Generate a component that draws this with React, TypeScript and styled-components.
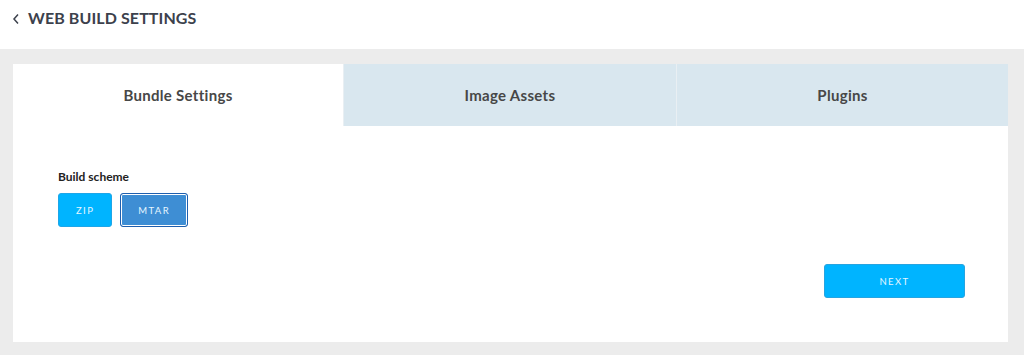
import React, { useState } from 'react'
import styled, { createGlobalStyle } from 'styled-components'

const GlobalStyle = createGlobalStyle`
    html, body {
        margin: 0;
        padding: 0;
        background: #ececec;
        font-family: Lato, "Open Sans", Arial, sans-serif;
    }
`

const TABS = ["Bundle Settings", "Image Assets", "Plugins"]

const App: React.FC = () => {
    const [tab, setTab] = useState<number>(0)
    const [scheme, setScheme] = useState<string>("MTAR")

    return (
        <Page>
            <GlobalStyle />
            <Header>
                <BackIcon viewBox="0 0 8 12" width="8" height="12">
                    <path d="M6 1.5L2 6l4 4.5" fill="none" stroke="#3c414c" strokeWidth="1.5" />
                </BackIcon>
                <Title>WEB BUILD SETTINGS</Title>
            </Header>
            <Body>
                <Panel>
                    <TabBar>
                        {TABS.map((t, i) =>
                            <Tab key={t} active={i === tab} onClick={() => setTab(i)}>{t}</Tab>
                        )}
                    </TabBar>
                    <Content>
                        <Label>Build scheme</Label>
                        <SchemeRow>
                            {["ZIP", "MTAR"].map((s) =>
                                <SchemeButton key={s} selected={s === scheme} onClick={() => setScheme(s)}>{s}</SchemeButton>
                            )}
                        </SchemeRow>
                        <Footer>
                            <NextButton>NEXT</NextButton>
                        </Footer>
                    </Content>
                </Panel>
            </Body>
        </Page>
    )
}

export default App

const Page = styled.div`
    width: 1024px;
    height: 355px;
    display: flex;
    flex-direction: column;
    background: #ececec;
`

const Header = styled.div`
    height: 49px;
    background: #fff;
    display: flex;
    align-items: flex-start;
    padding: 10px 0 0 12px;
    box-sizing: border-box;
    gap: 8px;
`

const BackIcon = styled.svg`
    margin-top: 3px;
`

const Title = styled.h1`
    margin: 0;
    font-size: 16px;
    line-height: 16px;
    font-weight: 700;
    color: #3c414c;
    letter-spacing: 0.1px;
`

const Body = styled.div`
    flex: 1;
    padding: 15px 16px 13px 13px;
    display: flex;
`

const Panel = styled.div`
    flex: 1;
    background: #fff;
    display: flex;
    flex-direction: column;
`

const TabBar = styled.div`
    display: grid;
    grid-template-columns: 330px 333px 1fr;
    height: 62px;
`

const Tab = styled.div<{ active: boolean }>`
    display: flex;
    align-items: center;
    justify-content: center;
    font-size: 15px;
    font-weight: 700;
    letter-spacing: 0.3px;
    color: #474747;
    cursor: pointer;
    background: ${(p) => p.active ? "#fff" : "#d9e7ef"};
    & + & {
        border-left: ${(p) => p.active ? "none" : "1px solid #e9eff3"};
    }
`

const Content = styled.div`
    flex: 1;
    display: flex;
    flex-direction: column;
    padding: 44px 43px 0 45px;
`

const Label = styled.p`
    margin: 0 0 10px 0;
    font-size: 12px;
    line-height: 13px;
    font-weight: 700;
    color: #222;
`

const SchemeRow = styled.div`
    display: flex;
    gap: 8px;
`

const SchemeButton = styled.button<{ selected: boolean }>`
    height: 34px;
    padding: 0 ${(p) => p.selected ? "17px" : "17px"};
    font-family: inherit;
    font-size: 9.5px;
    letter-spacing: 1.4px;
    color: #e6f6ff;
    border-radius: 3px;
    cursor: pointer;
    background: ${(p) => p.selected ? "#3e8ed4" : "#00b4ff"};
    border: ${(p) => p.selected ? "1px solid #1f5fae" : "1px solid #1ea6e8"};
    box-shadow: ${(p) => p.selected ? "inset 0 0 0 1px #fff" : "none"};
`

const Footer = styled.div`
    display: flex;
    justify-content: flex-end;
    margin-top: 37px;
`

const NextButton = styled.button`
    width: 141px;
    height: 34px;
    font-family: inherit;
    font-size: 9.5px;
    letter-spacing: 1.4px;
    color: #e6f6ff;
    background: #00b4ff;
    border: 1px solid #27a4e0;
    border-radius: 3px;
    cursor: pointer;
`
